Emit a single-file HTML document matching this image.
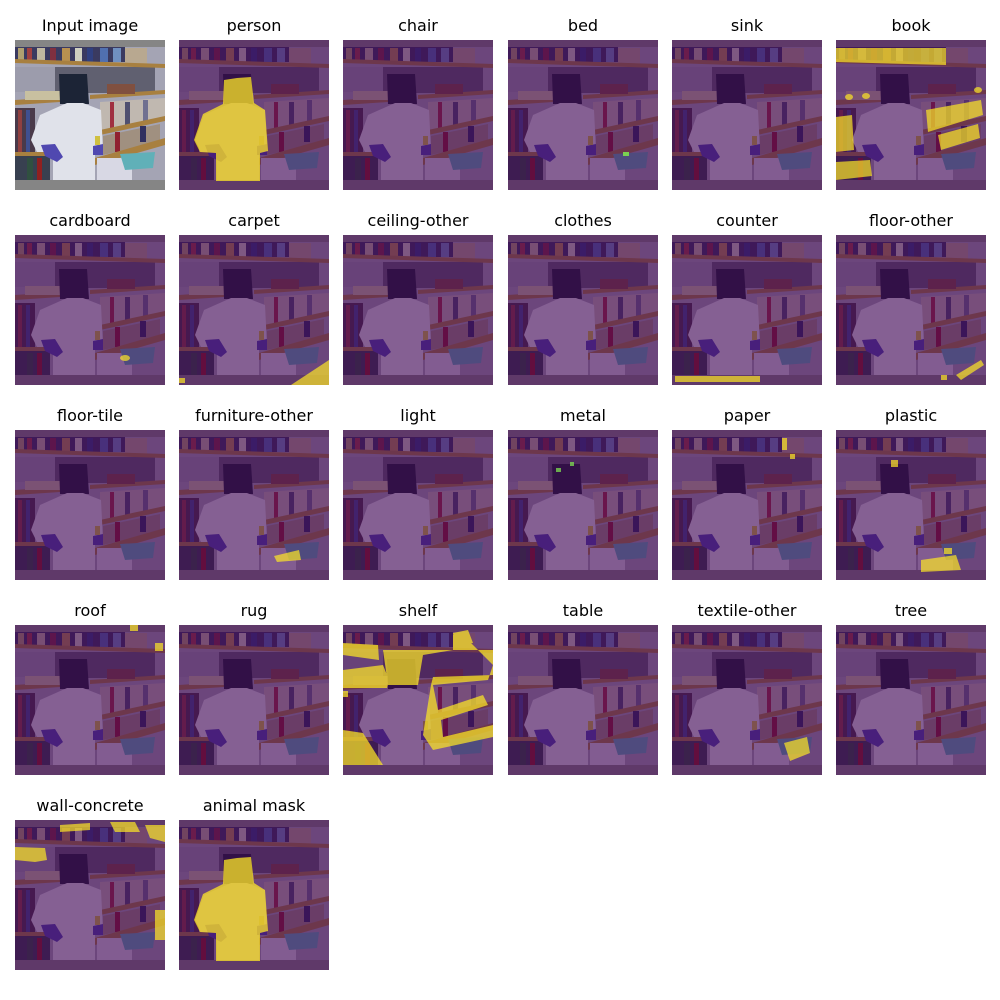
<!DOCTYPE html>
<html><head><meta charset="utf-8"><style>
body{margin:0;background:#fff;width:1000px;height:1000px;position:relative;overflow:hidden;font-family:"DejaVu Sans","Liberation Sans",sans-serif}
.t{position:absolute;width:200px;text-align:center;font-size:16px;line-height:16px;color:#000;white-space:nowrap}
svg.p{position:absolute;width:150px;height:150px}
</style></head><body>
<svg width="0" height="0" style="position:absolute">
<defs>
<symbol id="scene" viewBox="0 0 150 150">
<rect width="150" height="150" fill="#a4a4b4"/>
<rect x="0" y="27" width="40" height="25" fill="#9c9cac"/>
<rect x="40" y="27" width="100" height="26" fill="#606070"/>
<g>
<rect x="0" y="7" width="110" height="15" fill="#3a3a60"/>
<rect x="3" y="8" width="6" height="14" fill="#b0a070"/><rect x="12" y="8" width="5" height="14" fill="#a04040"/><rect x="22" y="8" width="8" height="14" fill="#c0b8a0"/><rect x="35" y="8" width="6" height="14" fill="#803040"/><rect x="47" y="8" width="8" height="14" fill="#b89050"/><rect x="60" y="8" width="7" height="14" fill="#d0d0c0"/><rect x="72" y="8" width="6" height="14" fill="#304080"/><rect x="85" y="8" width="8" height="14" fill="#5070b0"/><rect x="98" y="8" width="8" height="14" fill="#7090c0"/>
</g>
<rect x="110" y="8" width="22" height="16" fill="#b8a890"/>
<polygon points="0,19 150,24 150,28 0,23" fill="#a88040"/>
<polygon points="0,60 45,57 45,62 0,65" fill="#a88040"/>
<polygon points="75,55 150,50 150,54 75,59" fill="#a88040"/>
<rect x="10" y="51" width="35" height="9" fill="#c8c0a0"/>
<rect x="92" y="44" width="28" height="10" fill="#805040"/>
<rect x="0" y="68" width="20" height="47" fill="#4a3a4a"/>
<rect x="3" y="70" width="4" height="45" fill="#904040"/><rect x="11" y="70" width="4" height="45" fill="#405090"/>
<polygon points="85,62 150,58 150,80 85,92" fill="#c0b8b0"/>
<rect x="95" y="62" width="4" height="28" fill="#a03040"/><rect x="110" y="62" width="5" height="26" fill="#505070"/><rect x="128" y="60" width="5" height="22" fill="#707090"/>
<polygon points="85,90 150,76 150,81 85,95" fill="#a88040"/>
<polygon points="88,96 145,84 145,102 88,115" fill="#a09080"/>
<rect x="100" y="92" width="5" height="20" fill="#902030"/><rect x="125" y="86" width="6" height="16" fill="#303060"/>
<polygon points="80,118 150,98 150,105 80,125" fill="#a88040"/>
<rect x="0" y="112" width="35" height="4" fill="#a88040"/>
<rect x="0" y="116" width="35" height="24" fill="#384050"/>
<rect x="12" y="118" width="6" height="22" fill="#305040"/><rect x="22" y="118" width="5" height="22" fill="#902020"/>
<rect x="82" y="118" width="35" height="22" fill="#d8d8e4"/>
<polygon points="105,114 140,112 138,128 110,130" fill="#60b0b8"/>
<path d="M44,34 L72,34 L74,64 L45,64 Z" fill="#1c2436"/>
<path d="M52,63 L68,63 L86,70 L88,110 L80,112 L80,140 L38,140 L38,112 L22,112 L16,100 L25,75 Z" fill="#e0e2ea"/>
<path d="M26,105 L40,104 L48,117 L42,122 L30,116 Z" fill="#5048b0"/>
<path d="M78,106 L88,104 L88,115 L78,115 Z" fill="#5048b0"/>
<rect x="80" y="96" width="5" height="9" fill="#d0c040"/>
<rect x="0" y="0" width="150" height="7" fill="#858585"/>
<rect x="0" y="140" width="150" height="10" fill="#858585"/>
</symbol>
<symbol id="ov" viewBox="0 0 150 150">
<use href="#scene"/>
<rect width="150" height="150" fill="#440154" opacity="0.58"/>
</symbol>
<path id="pm" d="M45,40 L58,38 L72,37 L75,63 L86,70 L89,111 L81,113 L81,141 L37,141 L37,113 L21,112 L15,100 L24,74 L44,64 Z"/>
</defs>
</svg>

<div class="t" style="left:-10px;top:18px">Input image</div>
<div class="t" style="left:154px;top:18px">person</div>
<div class="t" style="left:318px;top:18px">chair</div>
<div class="t" style="left:483px;top:18px">bed</div>
<div class="t" style="left:647px;top:18px">sink</div>
<div class="t" style="left:811px;top:18px">book</div>
<div class="t" style="left:-10px;top:213px">cardboard</div>
<div class="t" style="left:154px;top:213px">carpet</div>
<div class="t" style="left:318px;top:213px">ceiling-other</div>
<div class="t" style="left:483px;top:213px">clothes</div>
<div class="t" style="left:647px;top:213px">counter</div>
<div class="t" style="left:811px;top:213px">floor-other</div>
<div class="t" style="left:-10px;top:408px">floor-tile</div>
<div class="t" style="left:154px;top:408px">furniture-other</div>
<div class="t" style="left:318px;top:408px">light</div>
<div class="t" style="left:483px;top:408px">metal</div>
<div class="t" style="left:647px;top:408px">paper</div>
<div class="t" style="left:811px;top:408px">plastic</div>
<div class="t" style="left:-10px;top:603px">roof</div>
<div class="t" style="left:154px;top:603px">rug</div>
<div class="t" style="left:318px;top:603px">shelf</div>
<div class="t" style="left:483px;top:603px">table</div>
<div class="t" style="left:647px;top:603px">textile-other</div>
<div class="t" style="left:811px;top:603px">tree</div>
<div class="t" style="left:-10px;top:798px">wall-concrete</div>
<div class="t" style="left:154px;top:798px">animal mask</div>

<!-- row 1 -->
<svg class="p" style="left:15px;top:40px" viewBox="0 0 150 150"><use href="#scene"/></svg>
<svg class="p" style="left:179px;top:40px" viewBox="0 0 150 150"><use href="#ov"/><use href="#pm" fill="#fde725" opacity="0.75"/></svg>
<svg class="p" style="left:343px;top:40px" viewBox="0 0 150 150"><use href="#ov"/></svg>
<svg class="p" style="left:508px;top:40px" viewBox="0 0 150 150"><use href="#ov"/><rect x="115" y="112" width="6" height="4" fill="#7ad151"/></svg>
<svg class="p" style="left:672px;top:40px" viewBox="0 0 150 150"><use href="#ov"/></svg>
<svg class="p" style="left:836px;top:40px" viewBox="0 0 150 150"><use href="#ov"/><g fill="#fde725" opacity="0.7"><path d="M0,8 L110,8 L110,25 L0,22 Z"/><path d="M0,77 L16,75 L18,110 L0,112 Z"/><path d="M0,122 L34,120 L36,136 L0,140 Z"/><path d="M90,70 L145,60 L147,75 L92,92 Z"/><path d="M102,95 L142,84 L144,98 L105,110 Z"/><ellipse cx="13" cy="57" rx="4" ry="3"/><ellipse cx="30" cy="56" rx="4" ry="3"/><ellipse cx="142" cy="50" rx="4" ry="3"/></g></svg>
<!-- row 2 -->
<svg class="p" style="left:15px;top:235px" viewBox="0 0 150 150"><use href="#ov"/><g fill="#fde725" opacity="0.7"><ellipse cx="110" cy="123" rx="5" ry="3"/></g></svg>
<svg class="p" style="left:179px;top:235px" viewBox="0 0 150 150"><use href="#ov"/><g fill="#fde725" opacity="0.7"><path d="M115,148 L150,125 L150,150 L112,150 Z"/><rect x="0" y="143" width="6" height="5"/></g></svg>
<svg class="p" style="left:343px;top:235px" viewBox="0 0 150 150"><use href="#ov"/></svg>
<svg class="p" style="left:508px;top:235px" viewBox="0 0 150 150"><use href="#ov"/></svg>
<svg class="p" style="left:672px;top:235px" viewBox="0 0 150 150"><use href="#ov"/><rect x="3" y="141" width="85" height="6" fill="#fde725" opacity="0.7"/></svg>
<svg class="p" style="left:836px;top:235px" viewBox="0 0 150 150"><use href="#ov"/><g fill="#fde725" opacity="0.7"><path d="M120,140 L145,125 L148,130 L125,145 Z"/><rect x="105" y="140" width="6" height="5"/></g></svg>
<!-- row 3 -->
<svg class="p" style="left:15px;top:430px" viewBox="0 0 150 150"><use href="#ov"/></svg>
<svg class="p" style="left:179px;top:430px" viewBox="0 0 150 150"><use href="#ov"/><g fill="#fde725" opacity="0.7"><path d="M95,126 L120,120 L122,130 L98,132 Z"/></g></svg>
<svg class="p" style="left:343px;top:430px" viewBox="0 0 150 150"><use href="#ov"/></svg>
<svg class="p" style="left:508px;top:430px" viewBox="0 0 150 150"><use href="#ov"/><g fill="#7ad151" opacity="0.8"><rect x="48" y="38" width="5" height="4"/><rect x="62" y="32" width="4" height="4"/></g></svg>
<svg class="p" style="left:672px;top:430px" viewBox="0 0 150 150"><use href="#ov"/><g fill="#fde725" opacity="0.7"><rect x="110" y="8" width="5" height="12"/><rect x="118" y="24" width="5" height="5"/></g></svg>
<svg class="p" style="left:836px;top:430px" viewBox="0 0 150 150"><use href="#ov"/><g fill="#fde725" opacity="0.7"><path d="M85,130 L120,125 L125,140 L85,142 Z"/><rect x="55" y="30" width="7" height="7"/><rect x="108" y="118" width="8" height="6"/></g></svg>
<!-- row 4 -->
<svg class="p" style="left:15px;top:625px" viewBox="0 0 150 150"><use href="#ov"/><g fill="#fde725" opacity="0.7"><rect x="115" y="0" width="8" height="6"/><rect x="140" y="18" width="8" height="8"/></g></svg>
<svg class="p" style="left:179px;top:625px" viewBox="0 0 150 150"><use href="#ov"/></svg>
<svg class="p" style="left:343px;top:625px" viewBox="0 0 150 150"><use href="#ov"/><g fill="#fde725" opacity="0.72"><path d="M0,18 L35,20 L36,35 L0,30 Z M0,45 L40,40 L46,55 L44,63 L0,63 Z M0,105 L20,108 L40,140 L0,140 Z M40,25 L150,25 L150,50 L90,52 L88,60 L80,110 L90,125 L150,112 L150,100 L100,112 L98,95 L145,80 L140,70 L95,85 L90,60 L145,55 L150,40 L120,10 L110,10 L110,25 L80,30 L75,60 L45,60 Z"/><path d="M0,66 L5,66 L5,72 L0,72 Z M110,8 L125,5 L130,18 L112,20 Z"/></g></svg>
<svg class="p" style="left:508px;top:625px" viewBox="0 0 150 150"><use href="#ov"/></svg>
<svg class="p" style="left:672px;top:625px" viewBox="0 0 150 150"><use href="#ov"/><g fill="#fde725" opacity="0.7"><path d="M112,118 L135,112 L138,128 L118,136 Z"/></g></svg>
<svg class="p" style="left:836px;top:625px" viewBox="0 0 150 150"><use href="#ov"/></svg>
<!-- row 5 -->
<svg class="p" style="left:15px;top:820px" viewBox="0 0 150 150"><use href="#ov"/><g fill="#fde725" opacity="0.7"><path d="M0,27 L30,28 L32,40 L20,42 L0,40 Z"/><path d="M45,5 L75,3 L75,10 L45,12 Z M95,2 L120,2 L125,12 L100,12 Z M130,5 L150,5 L150,22 L135,18 Z"/><rect x="140" y="90" width="10" height="30"/></g></svg>
<svg class="p" style="left:179px;top:820px" viewBox="0 0 150 150"><use href="#ov"/><use href="#pm" fill="#fde725" opacity="0.75"/></svg>
</body></html>
